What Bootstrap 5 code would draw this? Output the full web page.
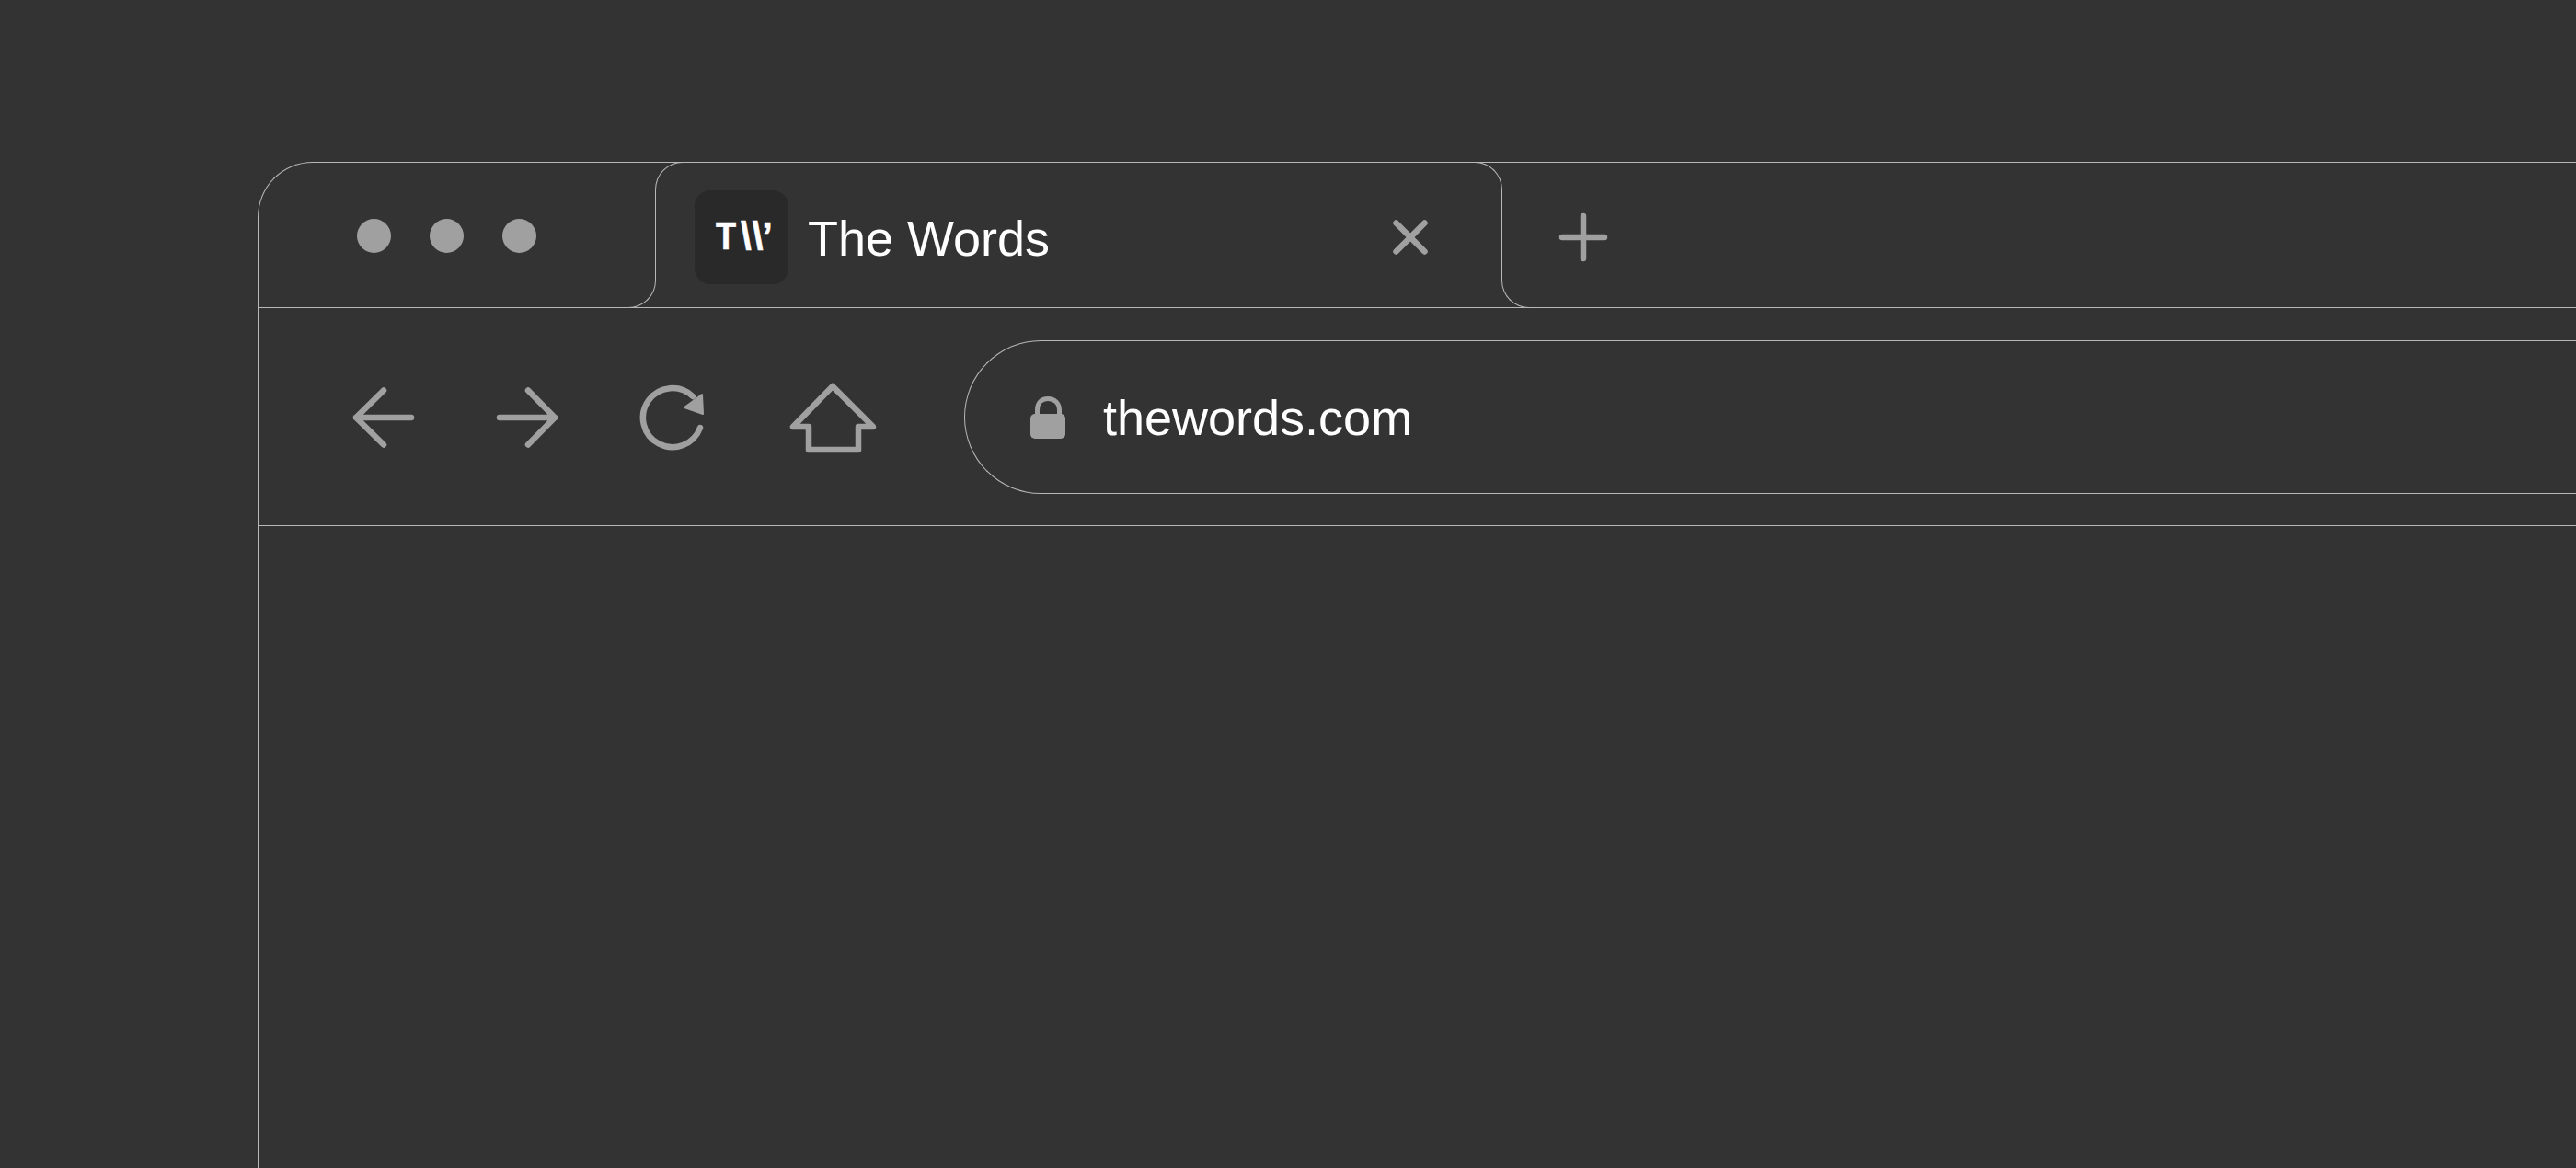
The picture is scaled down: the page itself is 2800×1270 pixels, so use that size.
<!DOCTYPE html>
<html lang="en">

<head>
    <meta charset="UTF-8">
    <meta name="viewport" content="width=device-width, initial-scale=1.0">
    <title>The Words</title>
    <link href="https://cdn.jsdelivr.net/npm/bootstrap@5.3.0/dist/css/bootstrap.min.css" rel="stylesheet">
    <style>
        body {
            background-color: #333333;
            overflow: hidden;
            font-family: "Liberation Sans", Arial, sans-serif;
            color: #fff;
        }

        svg {
            display: block;
            flex-shrink: 0;
        }

        .ico {
            fill: none;
            stroke: #a0a0a0;
            stroke-width: 6.5;
            stroke-linecap: round;
            stroke-linejoin: round;
        }

        .ico-fill {
            fill: #a0a0a0;
        }

        .ico-head {
            stroke: #a0a0a0;
            stroke-width: 2;
            stroke-linejoin: round;
        }

        .browser-frame {
            margin: 176px 0 0 280px;
            height: calc(100vh - 176px);
            border-top: 1px solid #b8b8b8;
            border-left: 1px solid #b8b8b8;
            border-top-left-radius: 60px;
        }

        .tab-strip {
            height: 158px;
            border-bottom: 1px solid #b8b8b8;
        }

        .window-dots {
            width: 431px;
            padding: 2px 0 0 107px;
            gap: 42px;
        }

        .window-dot {
            width: 37px;
            height: 37px;
            border-radius: 50%;
            background-color: #a0a0a0;
        }

        .browser-tab {
            width: 921px;
            height: 157px;
            padding: 5px 0 0 43px;
        }

        .tab-top {
            position: absolute;
            top: -1px;
            left: 0;
            right: 0;
            height: 129px;
            border: 1px solid #b8b8b8;
            border-bottom: 0;
            border-radius: 30px 30px 0 0;
        }

        .tab-flare-l,
        .tab-flare-r {
            position: absolute;
            bottom: -1px;
            width: 30px;
            height: 30px;
            border-bottom: 1px solid #b8b8b8;
        }

        .tab-flare-l {
            left: -29px;
            border-right: 1px solid #b8b8b8;
            border-bottom-right-radius: 30px;
        }

        .tab-flare-r {
            right: -29px;
            border-left: 1px solid #b8b8b8;
            border-bottom-left-radius: 30px;
        }

        .tab-favicon {
            width: 102px;
            height: 102px;
            border-radius: 17px;
            background-color: #292929;
            font-weight: 700;
            font-size: 42px;
            line-height: 1;
            padding: 0 0 2px 6px;
            -webkit-text-stroke: .6px #fff;
        }

        .logo-t {
            display: inline-block;
            width: 21px;
            margin-right: 6px;
            transform: scaleX(.86);
            transform-origin: left center;
        }

        .logo-w {
            letter-spacing: 1px;
        }

        .logo-q {
            margin-left: -2px;
        }

        .tab-title {
            margin-left: 21px;
            padding-top: 2px;
            font-size: 54px;
            line-height: 1;
        }

        .tab-close {
            margin-left: auto;
            margin-right: 80px;
            margin-bottom: 1px;
        }

        .tab-new {
            margin-left: 58px;
            margin-top: 4px;
        }

        .tool-bar {
            height: 237px;
            padding: 35px 0 34px 99px;
            border-bottom: 1px solid #b8b8b8;
        }

        .tool-icons {
            gap: 82px;
            padding-top: 1px;
        }

        .url-bar {
            height: 167px;
            margin-left: 88px;
            padding-left: 71px;
            border: 1px solid #b8b8b8;
            border-right: 0;
            border-radius: 84px 0 0 84px;
        }

        .lock-shackle {
            stroke-width: 5;
            stroke-linecap: butt;
        }

        .url-text {
            margin-left: 41px;
            padding-top: 1px;
            font-size: 54px;
            line-height: 1;
        }
    </style>
</head>

<body>
    <div class="browser-frame">
        <div class="tab-strip d-flex">
            <div class="window-dots d-flex align-items-center">
                <span class="window-dot"></span>
                <span class="window-dot"></span>
                <span class="window-dot"></span>
            </div>

            <div class="browser-tab position-relative d-flex align-items-center">
                <span class="tab-top"></span>
                <span class="tab-flare-l"></span>
                <span class="tab-flare-r"></span>
                <div class="tab-favicon d-flex align-items-center justify-content-center">
                    <span class="logo-t">T</span><span class="logo-w">\\</span><span class="logo-q">’</span>
                </div>
                <div class="tab-title">The Words</div>
                <svg class="tab-close" width="40" height="40" viewBox="0 0 40 40">
                    <path class="ico" d="M4.500 4.500 35.500 35.500M35.500 4.500 4.500 35.500" />
                </svg>
            </div>

            <svg class="tab-new align-self-center" width="60" height="60" viewBox="0 0 60 60">
                <path class="ico" d="M30 7V53M7 30H53" />
            </svg>
        </div>

        <div class="tool-bar d-flex align-items-center">
            <div class="tool-icons d-flex align-items-center">
                <svg width="74" height="72" viewBox="0 0 74 72">
                    <path class="ico" d="M7 36H67M37 6.500 7 36 37 65.500" />
                </svg>
                <svg width="74" height="72" viewBox="0 0 74 72">
                    <path class="ico" d="M67 36H7M38 6.500 67 36 38 65.500" />
                </svg>
                <svg width="78" height="72" viewBox="0 0 78 72">
                    <path class="ico" d="M69 47A32 32 0 1 1 61 13" />
                    <path class="ico-fill ico-head" d="M71 11 72 32 52 25Z" />
                </svg>
                <svg width="108" height="80" viewBox="0 0 108 80">
                    <path class="ico" d="M53 6 10 50H27V75H81V50H97Z" />
                </svg>
            </div>

            <div class="url-bar d-flex align-items-center flex-grow-1">
                <svg width="38" height="46" viewBox="0 0 38 46">
                    <path class="ico lock-shackle" d="M7.500 22V15C7.500 7 12 2.500 19 2.500 26 2.500 31.500 7 31.500 15V22" />
                    <rect class="ico-fill" y="19" width="38" height="27" rx="5" />
                </svg>
                <div class="url-text">thewords.com</div>
            </div>
        </div>
    </div>

    <script src="https://cdn.jsdelivr.net/npm/bootstrap@5.3.0/dist/js/bootstrap.bundle.min.js"></script>
</body>

</html>
